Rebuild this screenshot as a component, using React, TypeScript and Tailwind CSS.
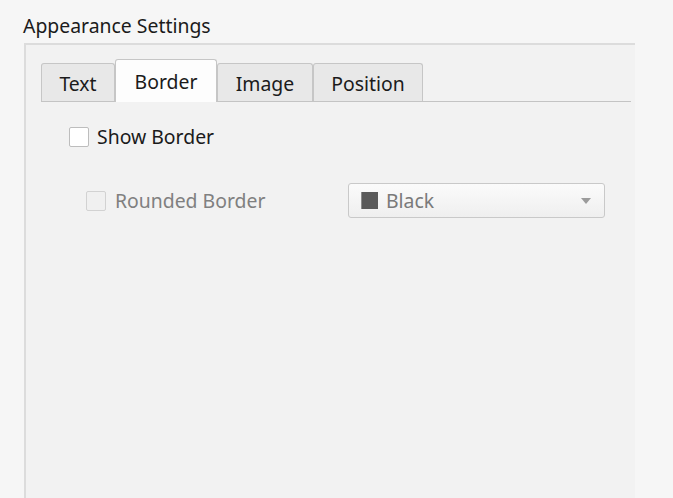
const tabs = [
  { label: 'Text', width: 'w-[74px]' },
  { label: 'Border', width: 'w-[102px]', active: true },
  { label: 'Image', width: 'w-[96px]' },
  { label: 'Position', width: 'w-[110px]' },
];

function Checkbox({ disabled }: { disabled?: boolean }) {
  return (
    <span
      className={
        disabled
          ? 'block h-[20px] w-[20px] rounded-[2px] border border-[#d2d2d2] bg-[#f0f0f0]'
          : 'block h-[20px] w-[20px] rounded-[2px] border border-[#bdbdbd] bg-white'
      }
    />
  );
}

export default function App() {
  return (
    <div
      className="flex h-[498px] w-[673px] flex-col overflow-hidden bg-[#f6f6f6] text-[19.4px] leading-[26px] text-[#1b1b1b]"
      style={{ fontFamily: '"Noto Sans", "Open Sans", sans-serif' }}
    >
      <div className="pl-[23px] pt-[13px]">Appearance Settings</div>

      <div className="mt-[4px] ml-[24px] flex-1 w-[611px] border-l-2 border-t-2 border-[#dcdcdc] bg-[#f2f2f2] pl-[15px] pr-[4px] pt-[15px]">
        {/* tab bar */}
        <div className="flex h-[42px] items-end border-b border-[#c4c4c4]">
          {tabs.map((tab) =>
            tab.active ? (
              <div
                key={tab.label}
                className={`${tab.width} relative -mb-px flex h-[43px] items-center justify-center rounded-t-[3px] border border-b-0 border-[#c6c6c6] bg-[#fdfdfd] pt-[1px]`}
              >
                {tab.label}
              </div>
            ) : (
              <div
                key={tab.label}
                className={`${tab.width} flex h-[38px] items-center justify-center rounded-t-[3px] border border-b-0 border-[#c6c6c6] bg-[#e8e8e8] pt-[2px]`}
              >
                {tab.label}
              </div>
            )
          )}
        </div>

        {/* tab page */}
        <div className="pl-[28px] pt-[22px]">
          <label className="flex h-[26px] items-center gap-[8px]">
            <Checkbox />
            <span>Show Border</span>
          </label>

          <div className="mt-[33px] flex h-[35px] items-center pl-[17px]">
            <div className="flex w-[262px] items-center gap-[9px] text-[#808080]">
              <Checkbox disabled />
              <span>Rounded Border</span>
            </div>
            <div className="flex h-[35px] w-[257px] items-center rounded-[3px] border border-[#c9c9c9] bg-gradient-to-b from-[#fbfbfb] to-[#efefef] pl-[12px] pr-[12px] text-[#7a7a7a]">
              <span className="mr-[8px] block h-[17px] w-[17px] border-l border-[#8c8c8c] bg-[#5a5a5a]" />
              <span className="flex-1">Black</span>
              <svg width="10" height="6" viewBox="0 0 10 6" className="mr-[1px]">
                <path d="M0 0 H10 L5 6 Z" fill="#9b9b9b" />
              </svg>
            </div>
          </div>
        </div>
      </div>
    </div>
  );
}
